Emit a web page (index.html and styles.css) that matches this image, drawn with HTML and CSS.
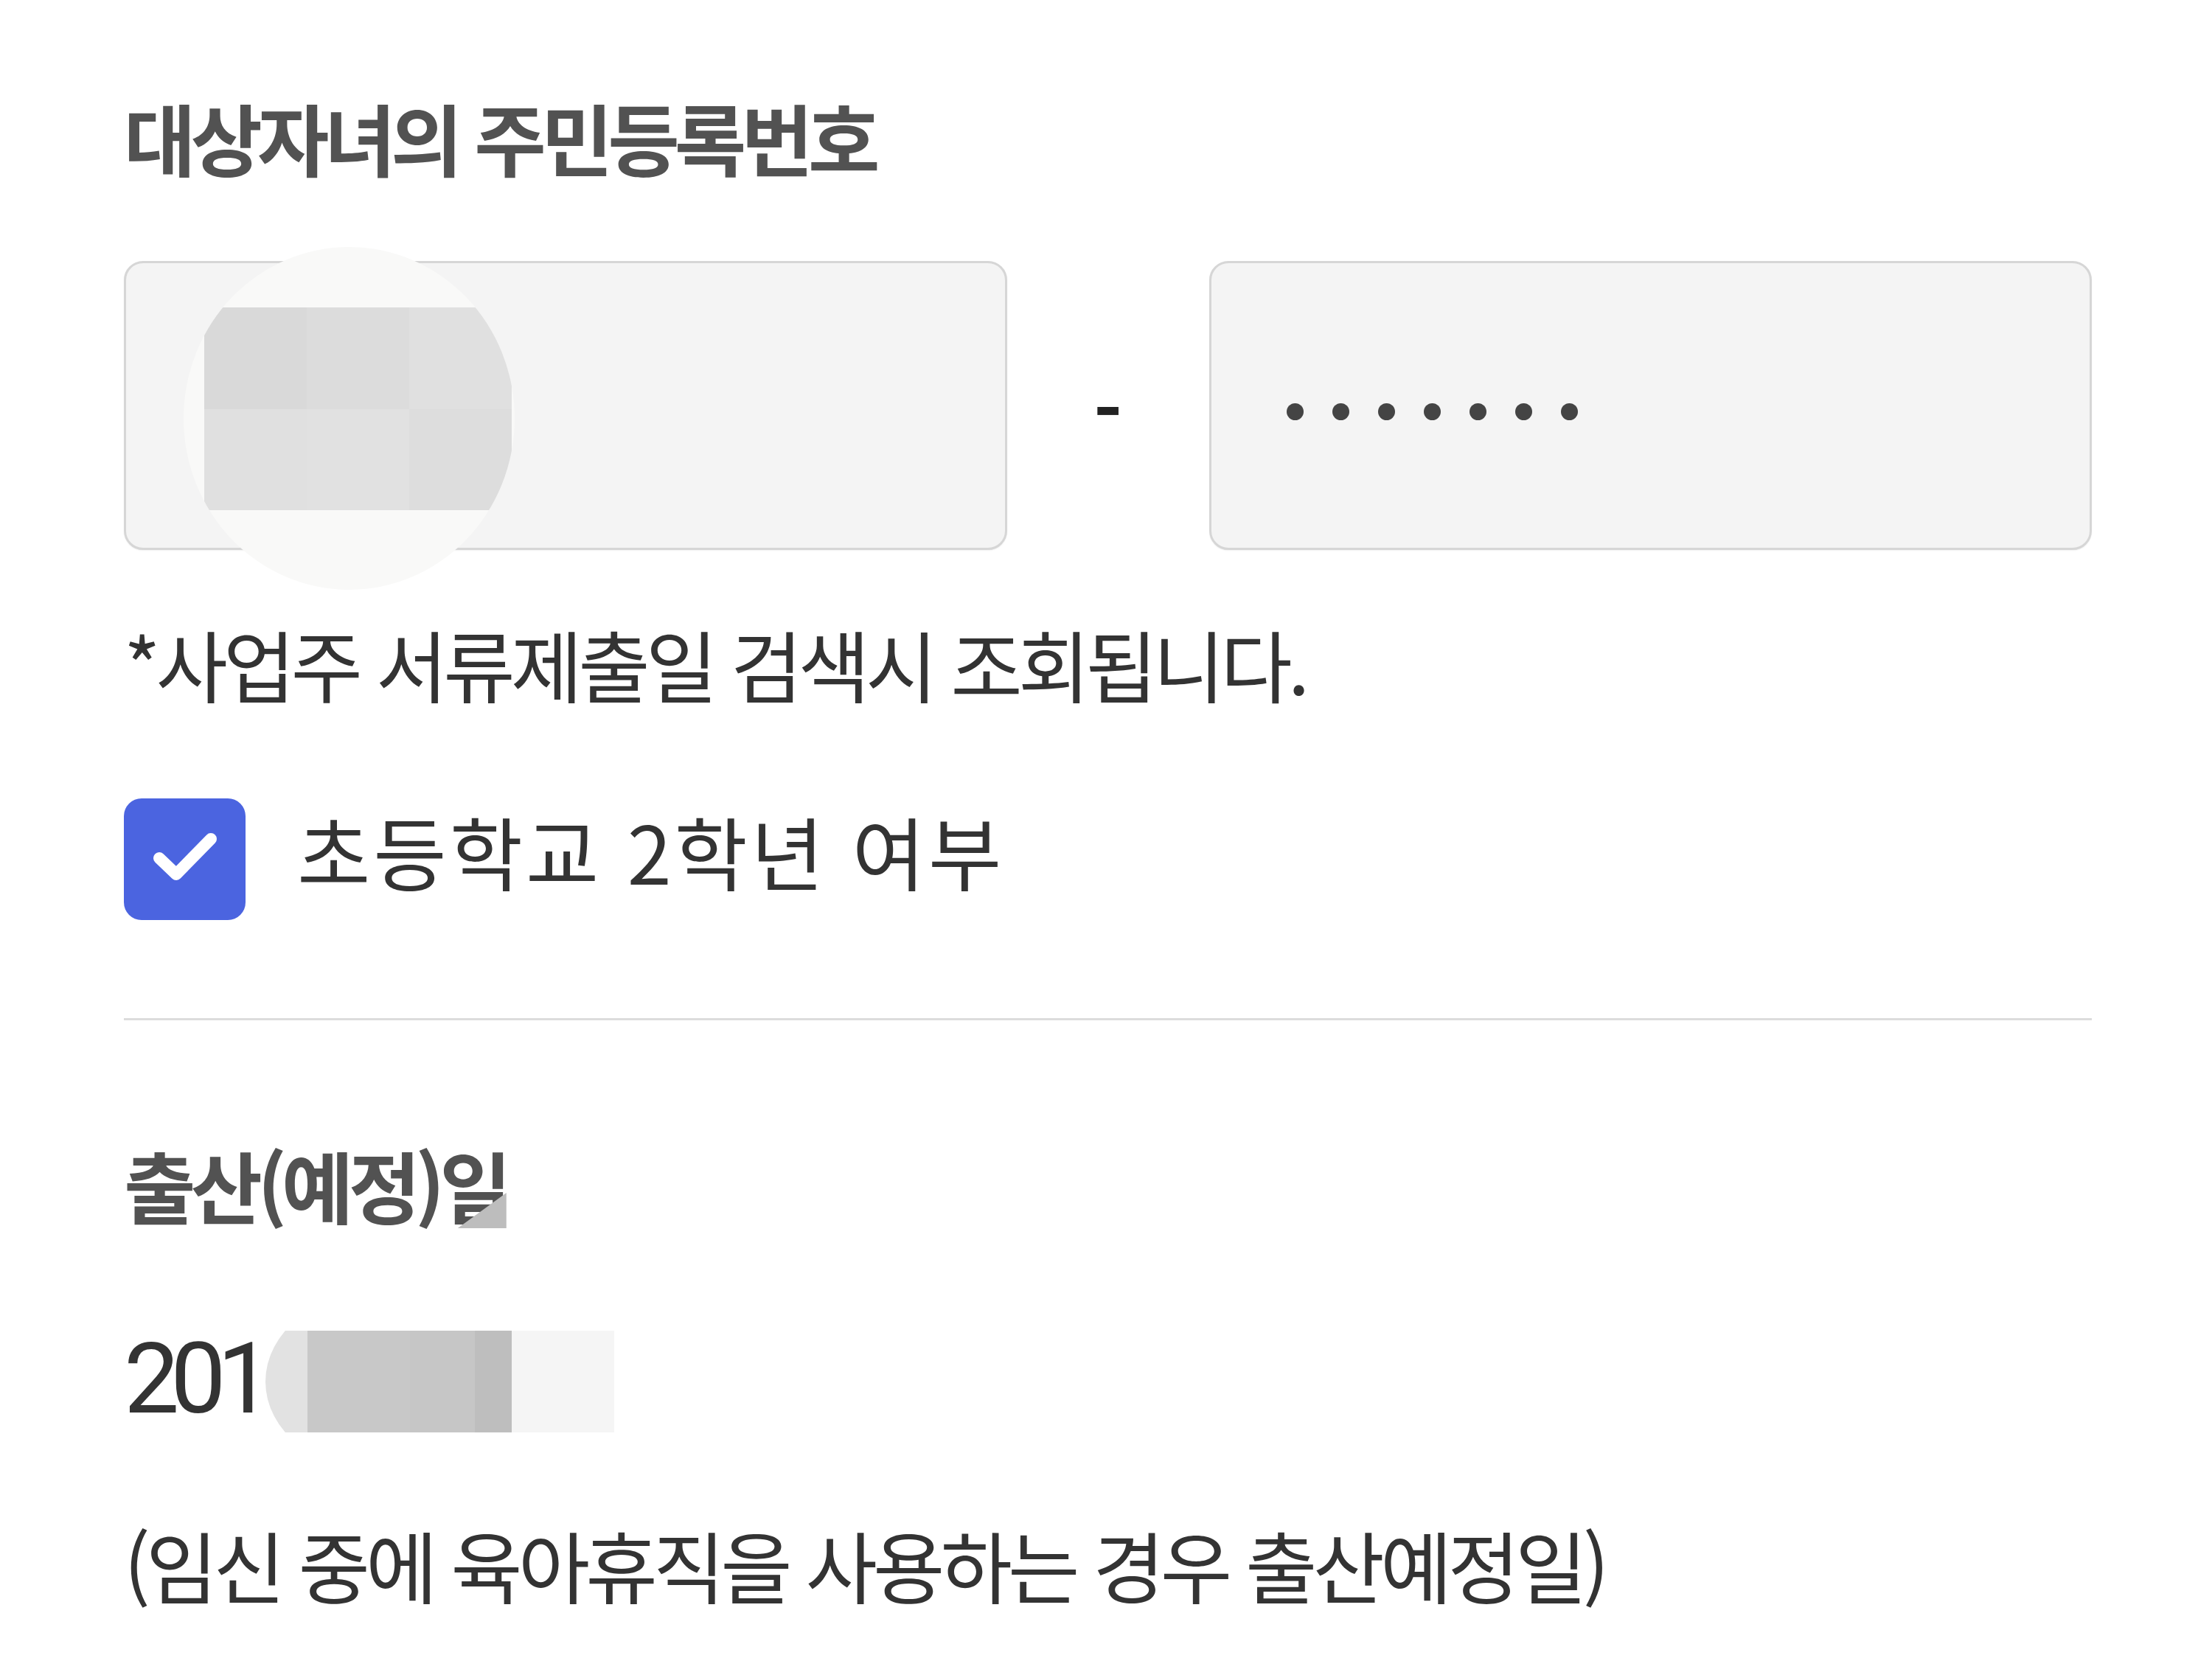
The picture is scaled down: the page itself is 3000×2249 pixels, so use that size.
FILE: index.html
```html
<!DOCTYPE html>
<html lang="ko">
<head>
  <meta charset="UTF-8">
  <title>육아휴직 신청</title>
  <link rel="stylesheet" href="styles.css">
</head>
<body>
  <main class="form">
    <!-- 대상자녀 주민번호 -->
    <section class="field">
      <h2 class="field-title">대상자녀의 주민등록번호</h2>
      <div class="rrn-row">
        <div class="rrn-box rrn-front">
          <div class="blur-blob">
            <div class="blur-cells">
              <span class="c1"></span><span class="c2"></span><span class="c3"></span>
              <span class="c4"></span><span class="c5"></span><span class="c6"></span>
            </div>
          </div>
        </div>
        <span class="rrn-dash">-</span>
        <div class="rrn-box rrn-back">
          <span class="dot"></span><span class="dot"></span><span class="dot"></span><span class="dot"></span>
          <span class="dot"></span><span class="dot"></span><span class="dot"></span>
        </div>
      </div>
      <p class="hint">*사업주 서류제출일 검색시 조회됩니다.</p>
      <label class="check-row">
        <span class="check-box">
          <svg viewBox="0 0 165 165" width="165" height="165">
            <polyline points="48,81 71,103 118,55" fill="none" stroke="#fff" stroke-width="16" stroke-linecap="round" stroke-linejoin="round"/>
          </svg>
        </span>
        <span class="check-label">초등학교 2학년 여부</span>
      </label>
    </section>

    <hr class="divider">

    <!-- 출산(예정)일 -->
    <section class="field">
      <h2 class="field-title field-title-2"><span class="title-wrap">출산(예정)일<span class="corner-mask"></span></span></h2>
      <div class="date-row">
        <span class="date-value">201</span>
        <div class="date-mask">
          <span class="date-blob"></span>
          <span class="m1"></span><span class="m2"></span><span class="m3"></span>
        </div>
      </div>
      <p class="hint hint-last">(임신 중에 육아휴직을 사용하는 경우 출산예정일)</p>
    </section>
  </main>
</body>
</html>
```

FILE: styles.css
```css
/* 기본 */
body {
  margin: 0;
  background: #fff;
  font-family: "Noto Sans CJK KR", "Noto Sans", sans-serif;
  color: #333;
}
.form {
  padding: 120px 163px 0 168px;
}
.field-title {
  margin: 0;
  font-size: 106px;
  line-height: 130px;
  font-weight: 700;
  letter-spacing: -7px;
  color: #525252;
}
/* 주민번호 입력 */
.rrn-row {
  margin-top: 104px;
  display: grid;
  grid-template-columns: 1fr 274px 1fr;
  height: 392px;
}
.rrn-box {
  position: relative;
  box-sizing: border-box;
  background: #f4f4f4;
  border: 3px solid #d6d6d6;
  border-radius: 26px;
  box-shadow: 0 1px 2px rgba(0,0,0,0.06);
}
.rrn-dash {
  display: flex;
  justify-content: center;
  align-items: center;
  font-size: 104px;
  font-weight: 700;
  color: #222;
  padding-top: 2px;
}
.rrn-back {
  display: flex;
  align-items: center;
  gap: 39px;
  padding-left: 102px;
  padding-top: 16px;
}
.dot {
  width: 23px;
  height: 23px;
  border-radius: 50%;
  background: #444;
}
/* 가림 처리 */
.blur-blob {
  position: absolute;
  left: 78px;
  top: -22px;
  width: 449px;
  height: 465px;
  border-radius: 50%;
  background: #f9f9f8;
  overflow: hidden;
}
.blur-cells {
  position: absolute;
  left: 28px;
  top: 82px;
  width: 417px;
  height: 275px;
  display: grid;
  grid-template-columns: repeat(3, 1fr);
  grid-template-rows: repeat(2, 1fr);
}
.c1 { background: #d9d9d9; }
.c2 { background: #dcdcdc; }
.c3 { background: #e0e0e0; }
.c4 { background: #e0e0e0; }
.c5 { background: #e1e1e1; }
.c6 { background: #dddddd; }

.hint {
  margin: 88px 0 0;
  font-size: 106px;
  line-height: 130px;
  letter-spacing: -6px;
  color: #333;
}
/* 체크박스 */
.check-row {
  margin-top: 119px;
  display: flex;
  align-items: center;
  gap: 70px;
  height: 165px;
}
.check-box {
  width: 165px;
  height: 165px;
  border-radius: 24px;
  background: #4b64e0;
  display: block;
  flex-shrink: 0;
}
.check-box svg {
  display: block;
}
.check-label {
  font-size: 108px;
  line-height: 130px;
  letter-spacing: 4px;
  color: #333;
  padding-bottom: 26px;
}
.divider {
  margin: 133px 0 0;
  border: 0;
  border-top: 3px solid #dcdcdc;
}
.field-title-2 {
  margin-top: 157px;
}
.title-wrap {
  position: relative;
  display: inline-block;
}
.corner-mask {
  position: absolute;
  right: 0;
  top: 77px;
  width: 66px;
  height: 48px;
  background: #bdbdbd;
  clip-path: polygon(0 100%, 100% 0, 100% 100%);
}
/* 날짜 */
.date-row {
  margin-top: 134px;
  display: flex;
  align-items: center;
  height: 138px;
}
.date-value {
  font-family: Roboto, "Noto Sans", sans-serif;
  font-size: 134px;
  line-height: 138px;
  letter-spacing: -12px;
  color: #333;
  padding-bottom: 6px;
}
.date-mask {
  position: relative;
  margin-left: 2px;
  width: 473px;
  height: 138px;
  overflow: hidden;
  display: flex;
  padding-left: 57px;
  box-sizing: border-box;
}
.date-blob {
  position: absolute;
  left: 0;
  top: -54px;
  width: 312px;
  height: 246px;
  border-radius: 50%;
  background: #e2e2e2;
}
.m1, .m2, .m3 {
  position: relative;
  width: 139px;
  height: 138px;
}
.m1 { background: #c8c8c8; }
.m2 { background: linear-gradient(90deg, #c6c6c6 64%, #bebebe 64%); }
.m3 { background: #f5f5f5; }
.hint-last {
  margin-top: 113px;
}
```
